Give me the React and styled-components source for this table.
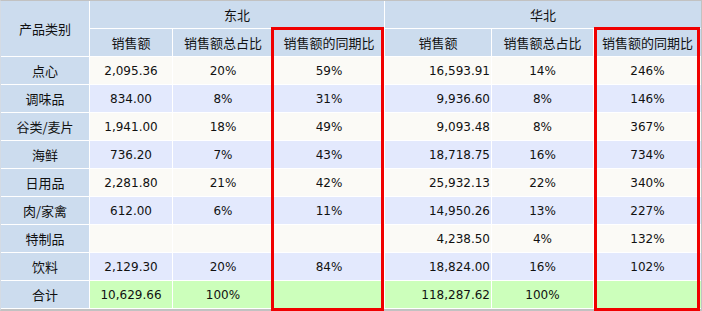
import React from "react";
import styled, { createGlobalStyle } from "styled-components";

const GlobalStyle = createGlobalStyle`
    html, body {
        margin: 0;
        padding: 0;
        background: #ffffff;
    }
`

const Wrapper = styled.div`
    position: relative;
    width: 702px;
`

const Table = styled.div`
    display: grid;
    grid-template-columns: 88px 82px 100px 110px 106px 101px 107px;
    grid-auto-rows: 27px;
    gap: 1px;
    background-color: #ffffff;
    border: 1px solid #c2c2c2;
    border-left-color: #d4dbe4;
    border-bottom-width: 2px;
    padding-bottom: 1px;
`

const Cell = styled.div`
    display: flex;
    align-items: center;
    justify-content: ${props => props.$align === "right" ? "flex-end" : "center"};
    padding-right: ${props => props.$align === "right" ? "1px" : "0"};
    grid-column: ${props => props.$span ? `span ${props.$span}` : "auto"};
    grid-row: ${props => props.$rows ? `span ${props.$rows}` : "auto"};
    background-color: ${props => props.$bg};
    color: #111111;
    font-family: ${props => props.$num
        ? `"DejaVu Sans", "Noto Sans CJK SC", sans-serif`
        : `"Noto Sans CJK SC", "DejaVu Sans", sans-serif`};
    font-size: ${props => props.$num ? "12px" : "13px"};
    white-space: nowrap;
`

const Highlight = styled.div`
    position: absolute;
    top: 27px;
    height: 284px;
    box-sizing: border-box;
    border: 3px solid #f00000;
    pointer-events: none;
`

const HEAD = "#ccdcee";
const ODD = "#fbfaf6";
const EVEN = "#e3e9fd";
const TOTAL = "#ccffbb";

const rows = [
    ["点心", "2,095.36", "20%", "59%", "16,593.91", "14%", "246%"],
    ["调味品", "834.00", "8%", "31%", "9,936.60", "8%", "146%"],
    ["谷类/麦片", "1,941.00", "18%", "49%", "9,093.48", "8%", "367%"],
    ["海鲜", "736.20", "7%", "43%", "18,718.75", "16%", "734%"],
    ["日用品", "2,281.80", "21%", "42%", "25,932.13", "22%", "340%"],
    ["肉/家禽", "612.00", "6%", "11%", "14,950.26", "13%", "227%"],
    ["特制品", "", "", "", "4,238.50", "4%", "132%"],
    ["饮料", "2,129.30", "20%", "84%", "18,824.00", "16%", "102%"],
    ["合计", "10,629.66", "100%", "", "118,287.62", "100%", ""],
];

const subHeads = ["销售额", "销售额总占比", "销售额的同期比"];

function App() {
    const body = rows.map((row, i) => {
        const isTotal = row[0] === "合计";
        const bg = isTotal ? TOTAL : (i % 2 === 0 ? ODD : EVEN);
        return (
            <React.Fragment key={row[0]}>
                <Cell $bg={HEAD}>{row[0]}</Cell>
                {row.slice(1).map((v, j) => (
                    <Cell key={j} $bg={bg} $num $align={j === 3 ? "right" : "center"}>
                        {v}
                    </Cell>
                ))}
            </React.Fragment>
        );
    });

    return (
        <Wrapper>
            <GlobalStyle />
            <Table>
                <Cell $bg={HEAD} $rows={2}>产品类别</Cell>
                <Cell $bg={HEAD} $span={3}>东北</Cell>
                <Cell $bg={HEAD} $span={3}>华北</Cell>
                {subHeads.map(h => <Cell key={"e" + h} $bg={HEAD}>{h}</Cell>)}
                {subHeads.map(h => <Cell key={"n" + h} $bg={HEAD}>{h}</Cell>)}
                {body}
            </Table>
            <Highlight style={{ left: 271, width: 113 }} />
            <Highlight style={{ left: 594, width: 106 }} />
        </Wrapper>
    );
}

export default App;
